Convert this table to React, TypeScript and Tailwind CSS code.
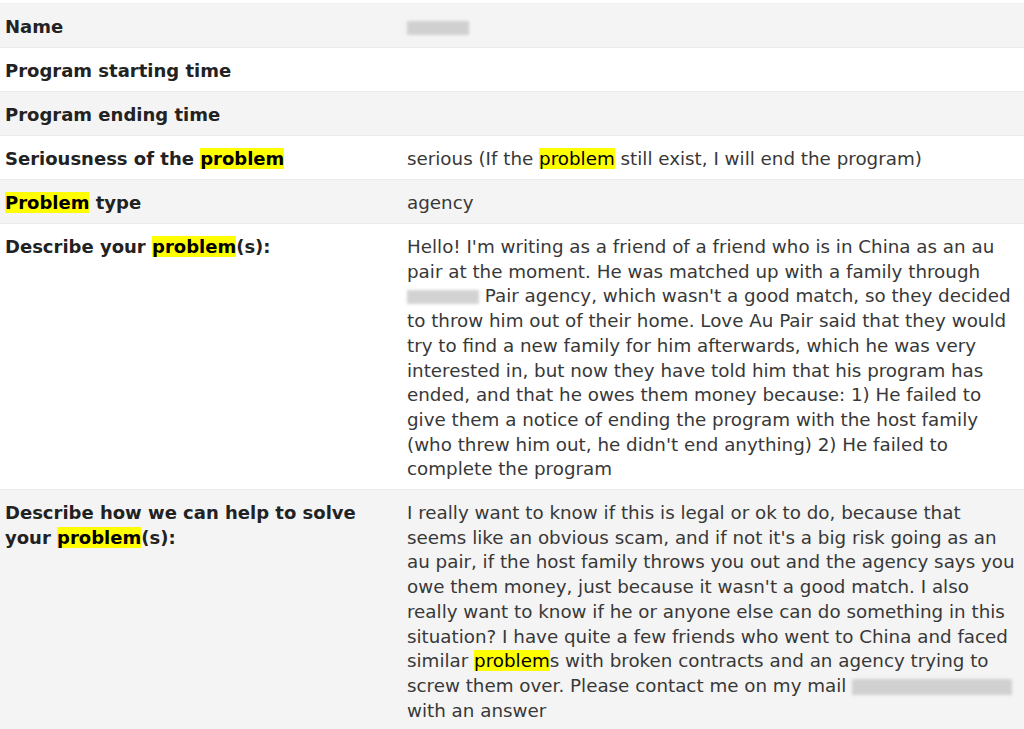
import React from "react";

const HL = ({ children }: { children: React.ReactNode }) => (
  <span className="bg-[#ffff00] text-black">{children}</span>
);

const Blur = ({ w, h = 14 }: { w: number; h?: number }) => (
  <span
    className="inline-block align-middle bg-[#c8c8c8] blur-[1.5px] opacity-80"
    style={{ width: w, height: h }}
  />
);

const Row = ({
  label,
  children,
  gray,
}: {
  label: React.ReactNode;
  children?: React.ReactNode;
  gray?: boolean;
}) => (
  <div
    className={`grid grid-cols-[402px_1fr] border-b border-[#ebebeb] ${
      gray ? "bg-[#f4f4f4]" : "bg-white"
    }`}
  >
    <div className="px-[5px] pt-[10px] pb-[8px] font-bold text-[#222] text-[18px] leading-[25px] font-['DejaVu_Sans',sans-serif]">
      {label}
    </div>
    <div className="px-[5px] pt-[11px] pb-[7px] text-[#383838] text-[18.3px] leading-[24.7px] font-['DejaVu_Sans',sans-serif]">
      {children}
    </div>
  </div>
);

const Lines = ({ lines }: { lines: React.ReactNode[] }) => (
  <>
    {lines.map((l, i) => (
      <span key={i} className="block whitespace-nowrap">
        {l}
      </span>
    ))}
  </>
);

export default function App() {
  return (
    <div className="w-[1024px] h-[729px] overflow-hidden bg-white">
      <div className="h-[4px] bg-white border-b border-[#f0f0f0]" />
      <Row label="Name" gray>
        <Blur w={62} />
      </Row>
      <Row label="Program starting time">&nbsp;</Row>
      <Row label="Program ending time" gray>
        &nbsp;
      </Row>
      <Row
        label={
          <>
            Seriousness of the <HL>problem</HL>
          </>
        }
      >
        serious (If the <HL>problem</HL> still exist, I will end the program)
      </Row>
      <Row
        label={
          <>
            <HL>Problem</HL> type
          </>
        }
        gray
      >
        agency
      </Row>
      <Row
        label={
          <>
            Describe your <HL>problem</HL>(s):
          </>
        }
      >
        <Lines
          lines={[
            "Hello! I'm writing as a friend of a friend who is in China as an au",
            "pair at the moment. He was matched up with a family through",
            <>
              <Blur w={72} /> Pair agency, which wasn't a good match, so they decided
            </>,
            "to throw him out of their home. Love Au Pair said that they would",
            "try to find a new family for him afterwards, which he was very",
            "interested in, but now they have told him that his program has",
            "ended, and that he owes them money because: 1) He failed to",
            "give them a notice of ending the program with the host family",
            "(who threw him out, he didn't end anything) 2) He failed to",
            "complete the program",
          ]}
        />
      </Row>
      <Row
        label={
          <>
            Describe how we can help to solve
            <br />
            your <HL>problem</HL>(s):
          </>
        }
        gray
      >
        <Lines
          lines={[
            "I really want to know if this is legal or ok to do, because that",
            "seems like an obvious scam, and if not it's a big risk going as an",
            "au pair, if the host family throws you out and the agency says you",
            "owe them money, just because it wasn't a good match. I also",
            "really want to know if he or anyone else can do something in this",
            "situation? I have quite a few friends who went to China and faced",
            <>
              similar <HL>problem</HL>s with broken contracts and an agency trying to
            </>,
            <>
              screw them over. Please contact me on my mail <Blur w={160} h={16} />
            </>,
            "with an answer",
          ]}
        />
      </Row>
    </div>
  );
}
